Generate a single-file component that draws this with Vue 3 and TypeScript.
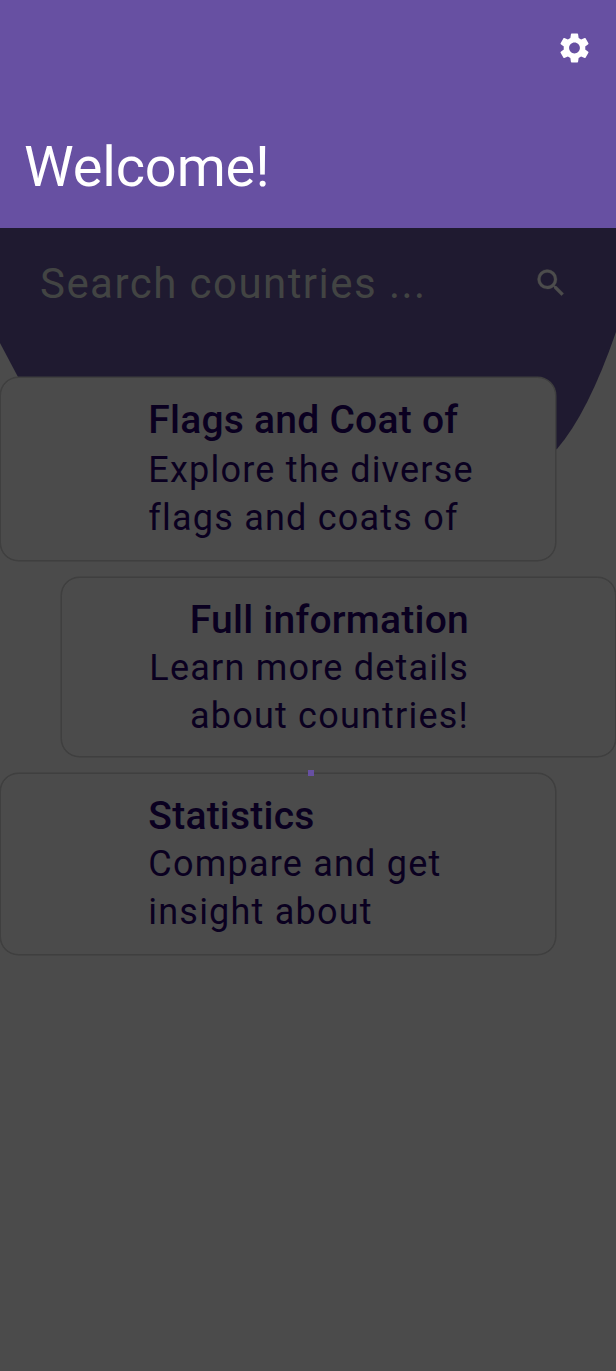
<script setup lang="ts">
interface Card {
  title: string
  lines: string[]
  kind: string
}

const cards: Card[] = [
  { title: 'Flags and Coat of', lines: ['Explore the diverse', 'flags and coats of'], kind: 'flags' },
  { title: 'Full information', lines: ['Learn more details', 'about countries!'], kind: 'info' },
  { title: 'Statistics', lines: ['Compare and get', 'insight about'], kind: 'stats' },
]
</script>

<template>
  <div class="screen">
    <header class="header">
      <svg class="gear" viewBox="0 0 24 24" aria-label="Settings">
        <path d="M19.14 12.94c.04-.3.06-.61.06-.94 0-.32-.02-.64-.07-.94l2.03-1.58c.18-.14.23-.41.12-.61l-1.92-3.32c-.12-.22-.37-.29-.59-.22l-2.39.96c-.5-.38-1.03-.7-1.62-.94l-.36-2.54c-.04-.24-.24-.41-.48-.41h-3.84c-.24 0-.43.17-.47.41l-.36 2.54c-.59.24-1.13.57-1.62.94l-2.39-.96c-.22-.08-.47 0-.59.22L2.74 8.87c-.12.21-.08.47.12.61l2.03 1.58c-.05.3-.09.63-.09.94s.02.64.07.94l-2.03 1.58c-.18.14-.23.41-.12.61l1.92 3.32c.12.22.37.29.59.22l2.39-.96c.5.38 1.03.7 1.62.94l.36 2.54c.05.24.24.41.48.41h3.84c.24 0 .44-.17.47-.41l.36-2.54c.59-.24 1.13-.56 1.62-.94l2.39.96c.22.08.47 0 .59-.22l1.92-3.32c.12-.22.07-.47-.12-.61l-2.01-1.58zM12 15.6c-1.98 0-3.6-1.62-3.6-3.6s1.62-3.6 3.6-3.6 3.6 1.62 3.6 3.6-1.62 3.6-3.6 3.6z" />
      </svg>
      <h1 class="welcome">Welcome!</h1>
    </header>
    <main class="content">
      <svg class="backdrop" viewBox="0 0 616 240" aria-hidden="true">
        <path d="M0 0H616V104Q588 185 557 221Q308 340 18 149L0 115Z" />
      </svg>
      <div class="search">
        <span class="placeholder">Search countries ...</span>
        <svg class="lens" viewBox="0 0 24 24" aria-label="Search">
          <path d="M15.5 14h-.79l-.28-.27A6.47 6.47 0 0 0 16 9.5 6.5 6.5 0 1 0 9.5 16c1.61 0 3.09-.59 4.23-1.57l.27.28v.79l5 4.99L20.49 19l-4.99-5zm-6 0C7.01 14 5 11.99 5 9.5S7.01 5 9.5 5 14 7.01 14 9.5 11.99 14 9.5 14z" />
        </svg>
      </div>
      <div class="cards">
        <section v-for="card in cards" :key="card.title" class="card" :class="card.kind">
          <h2 class="title">{{ card.title }}</h2>
          <p v-for="line in card.lines" :key="line" class="line">{{ line }}</p>
        </section>
      </div>
      <i class="dot"></i>
    </main>
  </div>
</template>

<style>
body {
  margin: 0;
  background: #4b4b4b;
}
</style>

<style scoped>
.screen {
  width: 616px;
  height: 1371px;
  overflow: hidden;
  display: flex;
  flex-direction: column;
  background: #4b4b4b;
  font-family: Roboto, sans-serif;
}
.header {
  box-sizing: border-box;
  height: 228px;
  padding: 30px 24px 0;
  display: flex;
  flex-direction: column;
  background: #6750a2;
}
.gear {
  width: 37px;
  height: 36px;
  align-self: flex-end;
  margin-right: -1px;
  fill: #fff;
}
.welcome {
  margin: 68px 0 0;
  font-size: 56px;
  line-height: 66px;
  letter-spacing: -.15px;
  font-weight: 400;
  color: #fff;
}
.content {
  position: relative;
  flex: 1;
}
.backdrop {
  position: absolute;
  inset: 0 0 auto;
  width: 616px;
  height: 240px;
  fill: #1f1a30;
}
.search {
  position: relative;
  box-sizing: border-box;
  height: 148px;
  padding: 31px 47px 0 40px;
  display: flex;
  align-items: flex-start;
  justify-content: space-between;
}
.placeholder {
  font-size: 42px;
  line-height: 50px;
  letter-spacing: 1.45px;
  color: #424443;
  white-space: nowrap;
}
.lens {
  width: 36px;
  height: 36px;
  margin-top: 6px;
  fill: #4c4c4c;
  stroke: #4c4c4c;
  stroke-width: .2px;
}
.cards {
  position: relative;
  display: flex;
  flex-direction: column;
  gap: 16px;
  padding-top: 1px;
}
.card {
  box-sizing: border-box;
  width: 556px;
  padding: 18px 0 0 147.3px;
  border: 1px solid #3f3f3f;
  border-radius: 18.5px;
  background: #4b4b4b;
  color: #0a0020;
  box-shadow: 0 0 0 .5px #3f3f3f;
}
.flags {
  height: 184px;
}
.info {
  width: 555px;
  height: 180px;
  align-self: flex-end;
  padding: 18px 146px 0 0;
  text-align: right;
}
.stats {
  height: 182px;
}
.title,
.line {
  margin: 0;
  line-height: 48px;
  white-space: nowrap;
}
.title {
  font-size: 39px;
  font-weight: 500;
  letter-spacing: .24px;
}
.flags .title {
  margin-bottom: 2px;
}
.line {
  font-size: 36px;
  font-weight: 400;
  letter-spacing: 1.21px;
}
.dot {
  position: absolute;
  left: 308px;
  top: 542px;
  width: 6px;
  height: 6px;
  background: #6750a2;
}
</style>
